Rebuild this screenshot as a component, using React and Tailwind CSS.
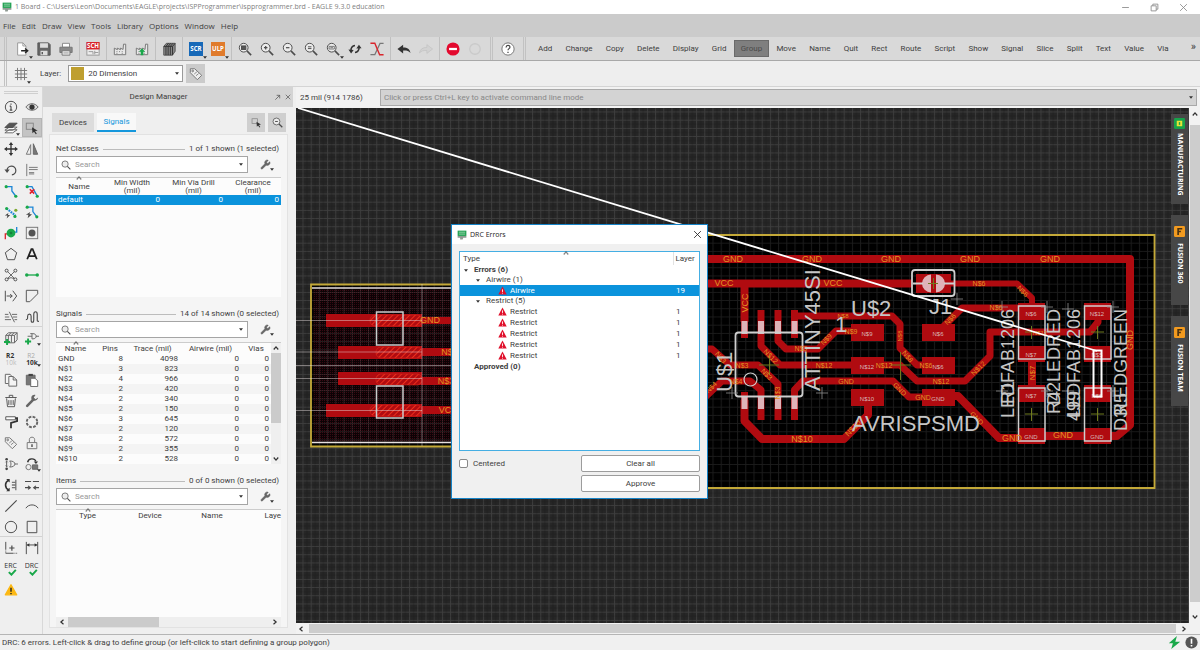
import { Wrench } from "lucide-react"
import clsx from "clsx"

const DARK = "#4c4c4c"
const GREEN = "#19a84a"
const BLUE = "#1c86d6"

const MENUS = ["File", "Edit", "Draw", "View", "Tools", "Library", "Options", "Window", "Help"]

const COMMANDS = [
    "Add", "Change", "Copy", "Delete", "Display", "Grid", "Group", "Move", "Name", "Quit", "Rect",
    "Route", "Script", "Show", "Signal", "Slice", "Split", "Text", "Value", "Via",
]

const SIGNALS = [
    ["GND", 8, 4098, 0, 0],
    ["N$1", 3, 823, 0, 0],
    ["N$2", 4, 966, 0, 0],
    ["N$3", 2, 420, 0, 0],
    ["N$4", 2, 340, 0, 0],
    ["N$5", 2, 150, 0, 0],
    ["N$6", 3, 645, 0, 0],
    ["N$7", 2, 120, 0, 0],
    ["N$8", 2, 572, 0, 0],
    ["N$9", 2, 355, 0, 0],
    ["N$10", 2, 528, 0, 0],
]

function Svg({ children, className = "size-[14px]" }) {
    return (
        <svg viewBox="0 0 16 16" className={className} fill="none" stroke={DARK} strokeWidth="1.1" aria-hidden="true">
            {children}
        </svg>
    )
}

/* ---------- top toolbar icons ---------- */

function Lens({ children }) {
    return (
        <>
            <circle cx="6.5" cy="6.5" r="5" fill="#ececec" />
            <path d="M10.2 10.2L15 15" strokeWidth="1.8" />
            {children}
        </>
    )
}

const Factory = (
    <path d="M1.5 14.5V7l3.5 1.8V7l3.5 1.8V7l3 1.5L12 2.5h2.5v12zM4 11h1M7 11h1M10 11h1M4 13h1M10 13h1" fill="#e8e8e8" stroke="#777" />
)

const TOP_ICONS = {
    new: (
        <>
            <path d="M3 1h6l3.5 3.5V15H3z" fill="#fff" stroke="#999" />
            <path d="M9 1v3.5h3.5" stroke="#999" />
            <path d="M7 10h7M11.5 7.5L14.5 10l-3 2.5" stroke="#222" strokeWidth="1.6" />
        </>
    ),
    save: (
        <>
            <path d="M1 1h12l2 2v12H1z" fill="#666" stroke="#555" />
            <path d="M3.5 1.5h9v5h-9zM4 10h8v5H4z" fill="#ddd" stroke="none" />
            <path d="M6 11.5v2.5" strokeWidth="1.5" />
        </>
    ),
    print: (
        <>
            <path d="M4 1.5h8V6H4z" fill="#fff" stroke="#888" />
            <path d="M1 6h14v6H1z" fill="#8a8a8a" stroke="#777" />
            <path d="M3.5 10h9v5h-9z" fill="#eee" stroke="#777" />
            <path d="M5 12.5h6" stroke="#999" />
        </>
    ),
    sch: (
        <>
            <rect x="1" y="1" width="14" height="14" fill="#eee" stroke="#999" />
            <rect x="0.5" y="0" width="15" height="8.5" fill="#d9252c" stroke="none" />
            <path d="M3 11h5v3M10 10v4M10 12h4" stroke="#999" />
            <text x="8" y="7" fontSize="7" fontWeight="700" fontFamily="Open Sans" textAnchor="middle" fill="#fff" stroke="none">SCH</text>
        </>
    ),
    cam: Factory,
    camUp: (
        <>
            {Factory}
            <path d="M8 7l3.5 4h-2v4h-3v-4h-2z" fill={GREEN} stroke="none" />
        </>
    ),
    library: (
        <>
            <path d="M2 5l3-3.5h10v9L12 15H2z" fill="#888" stroke="#555" />
            <path d="M2 5h10v10M12 5l3-3.5M4.5 5v10M7 5v10M9.5 5v10M4.5 5l3-3.5M7 5l3-3.5M9.5 5l3-3.5" stroke="#333" />
        </>
    ),
    scr: (
        <>
            <rect width="16" height="16" fill="#1769b8" stroke="none" />
            <text x="8" y="10.5" fontSize="7" fontWeight="700" fontFamily="Open Sans" textAnchor="middle" fill="#fff" stroke="none">SCR</text>
        </>
    ),
    ulp: (
        <>
            <rect width="16" height="16" fill="#e07b2c" stroke="none" />
            <text x="8" y="10.5" fontSize="7" fontWeight="700" fontFamily="Open Sans" textAnchor="middle" fill="#fff" stroke="none">ULP</text>
        </>
    ),
    zoomFit: <Lens><rect x="4" y="4.5" width="5" height="4" fill="#555" /></Lens>,
    zoomIn: <Lens><path d="M4.5 6.5h4M6.5 4.5v4" strokeWidth="1.4" /></Lens>,
    zoomOut: <Lens><path d="M4.5 6.5h4" strokeWidth="1.4" /></Lens>,
    zoomRedraw: <Lens><path d="M4.5 5.5h4M4.5 7.5h4" /></Lens>,
    zoomSelect: <Lens><path d="M3.5 5h6v3h-6zM5 6.5h3" stroke="#777" /></Lens>,
    refresh: (
        <>
            <path d="M3.5 10a5 5 0 0 1 4.5-6M12.5 6a5 5 0 0 1-4.5 6" strokeWidth="1.8" stroke="#333" />
            <path d="M0.5 8.5l3 4.5 3-4zM9.5 7.5l3-4.5 3 4z" fill="#333" stroke="none" />
        </>
    ),
    cut: (
        <>
            <path d="M15.5 1.5h-4L5.5 14.5H0.5" stroke="#777" strokeWidth="1.5" />
            <path d="M0.5 1.5h5L11 14.5h4.5" stroke="#d9252c" strokeWidth="1.6" />
        </>
    ),
    undo: <path d="M0.5 8L7 3v3.2c5 0 7.5 2 8.5 6.3C13 10 11 9.5 7 9.7V13z" fill="#333" stroke="none" />,
    redo: <path d="M15.5 8L9 3v3.2c-5 0-7.5 2-8.5 6.3C3 10 5 9.5 9 9.7V13z" fill="#d2d2d2" stroke="#c2c2c2" strokeWidth="0.8" />,
    stop: (
        <>
            <circle cx="8" cy="8" r="7.5" fill="#e3092e" stroke="none" />
            <path d="M3.5 8h9" stroke="#fff" strokeWidth="2.6" />
        </>
    ),
    go: <circle cx="8" cy="8" r="6" stroke="#cacaca" strokeWidth="1.5" />,
    help: (
        <>
            <circle cx="8" cy="8" r="7" fill="#fff" stroke="#777" />
            <path d="M5.8 6.2c0-3 4.4-3 4.4-.3 0 1.7-2.2 1.7-2.2 3.6M8 11v1.5" stroke="#444" strokeWidth="1.4" />
        </>
    ),
}

const TOP_GROUPS = [
    ["new", "save", "print"],
    ["sch"],
    ["cam", "camUp"],
    ["library"],
    ["scr", "ulp"],
    ["zoomFit", "zoomIn", "zoomOut", "zoomRedraw", "zoomSelect", "refresh", "cut"],
    ["undo", "redo"],
    ["stop", "go"],
]

const WITH_ARROW = ["new", "scr", "ulp", "zoomSelect", "layers", "addPart", "value", "replace"]

/* ---------- left toolbar icons ---------- */

const dot = (x, y, fill = GREEN, r = 1.8) => <circle cx={x} cy={y} r={r} fill={fill} stroke="none" />

const Tag = (
    <>
        <path d="M1.5 6.5V2h5l8 7.5-5 5z" fill="#eee" stroke="#777" />
        <circle cx="4.2" cy="4.5" r="1" stroke="#777" />
        <path d="M6 8l3-2.5M8 10l3-2.5" stroke="#888" />
    </>
)

const SIDE_ICONS = {
    info: (
        <>
            <circle cx="8" cy="8" r="6.5" />
            <path d="M8 7v4.5M6.5 7H8M6.5 11.5h3M8 4v1.3" strokeWidth="1.3" />
        </>
    ),
    show: (
        <>
            <path d="M1 8c3.5-5 10.5-5 14 0-3.5 5-10.5 5-14 0z" fill="#ddd" stroke="#666" />
            <circle cx="8" cy="8" r="3" fill="#333" stroke="none" />
        </>
    ),
    layers: (
        <>
            <path d="M1 13.5h9L15 10H6zM1 10.5h9L15 7H6z" fill="#fff" stroke="#666" />
            <path d="M1 7.5h9L15 2.5H6z" fill="#555" />
        </>
    ),
    group: (
        <>
            <rect x="1.5" y="2.5" width="8" height="7" stroke="#888" />
            <path d="M8 7l6.5 4-3 .5 2 3-1.2.7-2-3L8.5 14z" fill="#333" stroke="none" />
        </>
    ),
    move: (
        <>
            <path d="M8 3v10M3 8h10" stroke="#333" strokeWidth="1.5" />
            <path d="M8 0l2.5 3.5h-5zM8 16l2.5-3.5h-5zM0 8l3.5-2.5v5zM16 8l-3.5-2.5v5z" fill="#333" stroke="none" />
        </>
    ),
    mirror: (
        <>
            <path d="M6.5 3v11H1.5z" stroke="#777" />
            <path d="M9.5 2v12h5z" fill="#777" stroke="#666" />
        </>
    ),
    rotate: (
        <>
            <path d="M3.5 8.5a5 5 0 1 1 5.5 5" strokeWidth="1.4" />
            <path d="M0.5 7.5h6l-3 4z" fill={DARK} stroke="none" />
        </>
    ),
    align: <path d="M2 1v14M4.5 5h10M4.5 7.5h10M4.5 11h6M4.5 12.5h6" stroke="#777" />,
    route: <><path d="M2.5 3H9v5l4.5 6" stroke={BLUE} strokeWidth="1.5" />{dot(2.5, 3)}{dot(13.5, 14)}</>,
    ripup: (
        <>
            <path d="M2.5 3H8l5.5 10" stroke={BLUE} strokeWidth="1.5" />
            {dot(2.5, 3)}{dot(14, 14)}
            <path d="M5.5 6l5 5M10.5 6l-5 5" stroke="#e01f2d" strokeWidth="1.8" />
        </>
    ),
    fanout: (
        <>
            <path d="M3 4l10 8" stroke={BLUE} strokeWidth="2.5" strokeDasharray="2 1" />
            {dot(3, 4)}{dot(13.5, 6, "#7da82e")}{dot(12.5, 13)}
            <path d="M5 9l-4 3h3l-1 3.5 4-4H4.5z" fill="#444" stroke="none" />
        </>
    ),
    autoroute: (
        <>
            <path d="M2.5 2.5H9v5l4.5 6" stroke={BLUE} strokeWidth="1.5" />
            {dot(2.5, 2.5)}{dot(13.5, 13.5)}
            <path d="M6 8l-5 3h3l-1 4 5-4.5H5z" fill="#444" stroke="none" />
        </>
    ),
    via: (
        <>
            <path d="M1.5 15V9H6" stroke="#d9252c" strokeWidth="1.5" />
            <path d="M10 7h4.5V1" stroke={BLUE} strokeWidth="1.5" />
            {dot(8, 8, GREEN, 5)}{dot(8, 8, "#15803d", 1.5)}
        </>
    ),
    hole: (
        <>
            <rect x="1.5" y="1.5" width="13" height="13" stroke="#777" />
            {dot(8, 8, "#555", 4)}
        </>
    ),
    polygon: <path d="M8 1.5l6.5 5-2.5 8H4l-2.5-8z" />,
    text: <path d="M2.5 14L7.3 2.5h1.4L13.5 14M4.5 10.5h7" stroke="#222" strokeWidth="2" />,
    ratsnest: (
        <>
            <path d="M3.5 3.5l9 9M12.5 3.5l-9 9M3.5 12.5L8 11l4.5 1.5" stroke="#666" />
            <circle cx="3" cy="3" r="1.7" fill="#eee" /><circle cx="13" cy="3" r="1.7" fill="#eee" />
            <circle cx="3" cy="13" r="1.7" fill="#eee" /><circle cx="13" cy="13" r="1.7" fill="#eee" />
        </>
    ),
    airwire: <><path d="M2 8h12" stroke={GREEN} strokeWidth="1.5" />{dot(2, 8, GREEN, 2)}{dot(14, 8, GREEN, 2)}</>,
    split: <path d="M1.5 2v12M3 8h6M7 6l2.5 2L7 10M10 2l4.5 6L10 14" />,
    miter: <path d="M14.5 5.5v-4h-13v13h4M5.5 14.5l9-9" stroke="#555" />,
    slice: <path d="M1 5h4M1 8h5M1 11h7M6 2l6 12M9 5h6M10 8h5M12 11h3" stroke="#666" />,
    meander: <path d="M1 11c2 0 2-1 2-4s4-3 4 0v4c0 4 3 4 3 0V5c0-4 4-4 4 0v6c0 2 0 2 2 2" strokeWidth="1.3" />,
    addBoard: (
        <>
            <path d="M2 5l3-3h10v8l-3 3.5H2z" fill="#eee" stroke="#666" />
            <path d="M2 5h10v8.5M12 5l3-3M5 5v8M8.5 5v8M5 5l3-3M8.5 5l3-3" stroke="#666" />
            <path d="M3.5 9v7M0 12.5h7" stroke={GREEN} strokeWidth="2.2" />
        </>
    ),
    addPart: (
        <>
            <path d="M6 3h3c5 0 5 6 0 6H8V3M3 6h5M12.5 6H16" stroke="#666" />
            <path d="M3.5 8.5v7M0 12h7" stroke={GREEN} strokeWidth="2.2" />
        </>
    ),
    name: (
        <>
            <text x="7" y="7" fontSize="7.5" fontWeight="700" fontFamily="Open Sans" textAnchor="middle" fill="#333" stroke="none">R2</text>
            <text x="8" y="15" fontSize="7.5" fontFamily="Open Sans" textAnchor="middle" fill="#bbb" stroke="none">10k</text>
        </>
    ),
    value: (
        <>
            <text x="7" y="7" fontSize="7.5" fontFamily="Open Sans" textAnchor="middle" fill="#aaa" stroke="none">R2</text>
            <text x="8" y="15" fontSize="7.5" fontWeight="700" fontFamily="Open Sans" textAnchor="middle" fill="#333" stroke="none">10k</text>
        </>
    ),
    copy: <path d="M5 12H1.5V1.5H7L9 4M5.5 4h5l4 4v7h-9zM10.5 4v4h4" fill="#f4f4f4" stroke="#666" />,
    paste: (
        <>
            <path d="M1.5 2.5h10v11h-10z" fill="#777" stroke="#666" />
            <path d="M4 1h5v2.5H4z" fill="#444" stroke="none" />
            <path d="M6.5 6h5l3 3v6.5h-8z" fill="#fff" stroke="#666" />
        </>
    ),
    trash: <path d="M3 5l1 9.5h8L13 5M1.5 4h13M6 3.5V1.5h4v2M5.5 7v5.5M8 7v5.5M10.5 7v5.5" stroke="#555" />,
    change: (
        <>
            <path d="M2.5 13.5l7-7" stroke="#666" strokeWidth="3" strokeLinecap="round" />
            <path d="M15 4l-3 2-2-2 2-3c-4-1-6 3-4 6 3 2 7 0 7-3z" fill="#666" stroke="none" />
        </>
    ),
    paint: (
        <>
            <path d="M2 2h11v3.5H2z" fill="#fff" stroke="#555" />
            <path d="M13 3.5h2V7L8 9v6" stroke="#333" strokeWidth="2" />
        </>
    ),
    optimize: <circle cx="8" cy="8" r="6" stroke="#666" strokeWidth="2.2" strokeDasharray="3.2 1.51" />,
    tag: Tag,
    lock: (
        <>
            <path d="M2.5 7.5h11v7h-11zM5 7V4c0-3.5 6-3.5 6 0v3" stroke="#777" />
            <path d="M8 9.5v3" strokeWidth="1.6" />
        </>
    ),
    pinswap: (
        <>
            {dot(3, 2.5, "#444", 1.5)}{dot(3, 13.5, "#444", 1.5)}
            <path d="M3 5v6M1.8 6L3 4.8 4.2 6M1.8 10L3 11.2 4.2 10" stroke="#555" />
            <path d="M6.5 4.5c8 0 8 7 0 7 2-2 2-5 0-7zM12.5 8H16" stroke="#666" />
        </>
    ),
    replace: (
        <>
            <path d="M3 6c1-5 8-5 9.5-1" stroke="#333" strokeWidth="1.6" />
            <path d="M10 5h5l-2.5 3z" fill="#333" stroke="none" />
            <circle cx="4" cy="11.5" r="3" stroke="#777" />
            <path d="M8.5 9h6v5h-6z" fill="#777" stroke="#666" />
        </>
    ),
    gateswap: (
        <>
            <path d="M5.5 2.5c-5 2-5 9 0 11" stroke="#333" strokeWidth="1.8" />
            <path d="M2.5 1h4v4zM2.5 15h4v-4z" fill="#333" stroke="none" />
            <path d="M9 5h4M9 8h4M9 11h4M13.5 2v12" stroke="#777" strokeWidth="1.5" />
        </>
    ),
    join: <path d="M0 4h7M9 4h7M0 11h5M3.5 9L6 11l-2.500 2M16 11h-5M12.5 9L10 11l2.5 2" strokeWidth="1.4" />,
    line: <path d="M1.5 14.5l13-13" strokeWidth="1.3" />,
    arc: <path d="M1 10.5c3-5 11-5 14 0" />,
    circle: <circle cx="8" cy="8" r="6.5" />,
    rect: <path d="M2.5 1.5h11v13h-11z" />,
    mark: (
        <>
            <path d="M2 1v13M2 14h13" strokeDasharray="9 1 1 1" />
            <path d="M9 5v6M6 8h6" strokeWidth="1.4" />
        </>
    ),
    dimension: (
        <>
            <path d="M1.5 1v14M14.5 1v14M2 4.5h12" />
            <path d="M2 4.5l3-2v4zM14 4.5l-3-2v4z" fill="#333" stroke="none" />
        </>
    ),
    erc: (
        <>
            <text x="7.5" y="7" fontSize="8" fontFamily="Open Sans" textAnchor="middle" fill="#333" stroke="none">ERC</text>
            <path d="M5.5 11.5l3 3 5-5.5" stroke={GREEN} strokeWidth="2.2" />
        </>
    ),
    drc: (
        <>
            <text x="7.5" y="7" fontSize="8" fontFamily="Open Sans" textAnchor="middle" fill="#333" stroke="none">DRC</text>
            <path d="M5.5 11.5l3 3 5-5.5" stroke={GREEN} strokeWidth="2.2" />
        </>
    ),
    errors: (
        <>
            <path d="M8 2l6.5 11.5h-13z" fill="#fcb813" stroke="#fcb813" strokeWidth="1.5" strokeLinejoin="round" />
            <path d="M8 5.5v4.5M8 11.3v1.5" stroke="#222" strokeWidth="1.6" />
        </>
    ),
}

const SIDE_GROUPS = [
    ["info", "show", "layers", "group"],
    ["move", "mirror", "rotate", "align"],
    ["route", "ripup", "fanout", "autoroute", "via", "hole", "polygon", "text", "ratsnest", "airwire", "split", "miter", "slice", "meander"],
    ["addBoard", "addPart", "name", "value", "copy", "paste", "trash", "change", "paint", "optimize", "tag", "lock", "pinswap", "replace", "gateswap", "join"],
    ["line", "arc", "circle", "rect"],
    ["mark", "dimension", "erc", "drc", "errors"],
]

function Caret({ className }) {
    return (
        <svg viewBox="0 0 6 4" className={clsx("h-[3px] w-[4px] shrink-0", className)} aria-hidden="true">
            <path d="M0 0h6L3 4z" fill="#333" />
        </svg>
    )
}

function Chevron({ className }) {
    return (
        <svg viewBox="0 0 8 8" className={clsx("size-[6px] shrink-0", className)} fill="none" stroke="#333" strokeWidth="1.6" aria-hidden="true">
            <path d="M1 6l3-3.5L7 6" />
        </svg>
    )
}

function BoardLogo() {
    return (
        <Svg className="size-[10px] shrink-0">
            <path d="M1 1h14v8.5H1z" fill="#21a052" stroke="none" />
            <path d="M3 3.5h10M3 6.5h10" stroke="#bfe8cc" />
            <path d="M1 9.5h14v3h-5L9 15H5v-2.5H1z" fill="#8f9a93" stroke="none" />
        </Svg>
    )
}

function IconButton({ name, icons, className }) {
    return (
        <button aria-label={name} className={clsx("relative flex items-center justify-center", className)}>
            <Svg>{icons[name]}</Svg>
            {WITH_ARROW.includes(name) && <Caret className="absolute right-0 bottom-0" />}
        </button>
    )
}

function TitleBar() {
    return (
        <header className="flex h-[14px] items-center bg-white pr-3 pl-0.5 font-['Open_Sans',sans-serif] text-[7px] text-[#808080]">
            <BoardLogo />
            <h1 className="ml-[3px] flex-1 whitespace-nowrap">
                1 Board - C:\Users\Leon\Documents\EAGLE\projects\ISPProgrammer\ispprogrammer.brd - EAGLE 9.3.0 education
            </h1>
            <div className="flex gap-5">
                <button aria-label="Minimize"><Svg className="size-[9px]"><path d="M2 8h12" stroke="#888" strokeWidth="1.5" /></Svg></button>
                <button aria-label="Restore"><Svg className="size-[9px]"><path d="M2 5h9v9H2zM5 5V2h9v9h-3" stroke="#888" strokeWidth="1.5" /></Svg></button>
                <button aria-label="Close"><Svg className="size-[9px]"><path d="M2 2l12 12M14 2L2 14" stroke="#888" strokeWidth="1.5" /></Svg></button>
            </div>
        </header>
    )
}

function Grip() {
    return <span className="mx-1 w-[3px] self-stretch border-x border-[#c2c2c2]" />
}

function TopToolbar() {
    return (
        <div className="flex h-6 items-center border-b border-[#a8a8a8] bg-[#d9d9d9]">
            <Grip />
            {TOP_GROUPS.map((group, i) => (
                <div key={i} className="flex h-full items-center">
                    {i > 0 && <span className="mx-0.5 w-px self-stretch bg-[#c0c0c0]" />}
                    {group.map(name => (
                        <IconButton key={name} name={name} icons={TOP_ICONS} className="h-[20px] w-[22px]" />
                    ))}
                </div>
            ))}
            <Grip />
            <IconButton name="help" icons={TOP_ICONS} className="h-[20px] w-[22px]" />
            <Grip />
            <div className="ml-0.5 flex flex-1 items-center justify-between">
                {COMMANDS.map(command => (
                    <button
                        key={command}
                        className={clsx("h-[17px] px-1.5", command === "Group" && "border border-[#6a6a6a] bg-[#7f7f7f] text-[#4a4a4a]")}
                    >
                        {command}
                    </button>
                ))}
            </div>
            <button aria-label="More commands" className="mb-1 ml-4 pr-1 text-[11px] leading-3">»</button>
        </div>
    )
}

function LayerBar() {
    return (
        <div className="flex h-[26px] items-center border-b border-[#d4d4d4] bg-[#eee]">
            <Grip />
            <button aria-label="Grid" className="relative flex h-[20px] w-[20px] items-center justify-center">
                <Svg><path d="M1 4h14M1 8h14M1 12h14M4 1v14M8 1v14M12 1v14" stroke="#777" /></Svg>
                <Caret className="absolute right-0 bottom-0" />
            </button>
            <label htmlFor="layer" className="ml-[9px]">Layer:</label>
            <div className="relative ml-[7px]">
                <select id="layer" className="h-[17px] w-[115px] appearance-none border border-[#9a9a9a] bg-white pl-[19px] outline-none">
                    <option>20 Dimension</option>
                </select>
                <span className="pointer-events-none absolute top-0.5 left-[3px] size-[13px] bg-[#bf9f2f]" />
                <Caret className="pointer-events-none absolute top-[7px] right-1" />
            </div>
            <button aria-label="Tags" className="ml-[3px] flex size-[19px] items-center justify-center bg-[#cbcbcb]">
                <Svg>{Tag}</Svg>
            </button>
        </div>
    )
}

function SideToolbar() {
    return (
        <nav className="flex w-[43px] shrink-0 flex-col border-r border-[#d8d8d8] bg-[#efefef]">
            <span className="mx-1 mt-1 h-[3px] border-y border-[#cfcfcf]" />
            <div className="pt-0.5">
                {SIDE_GROUPS.map((group, i) => (
                    <div key={i} className={clsx("grid auto-rows-[21px] grid-cols-2 justify-items-center", i > 0 && "shadow-[0_-1px_0_#d2d2d2]")}>
                        {group.map(name => (
                            <IconButton
                                key={name}
                                name={name}
                                icons={SIDE_ICONS}
                                className={clsx("my-0.5 w-[18px]", name === "group" && "bg-[#c4c4c4] outline outline-[#b5b5b5]")}
                            />
                        ))}
                    </div>
                ))}
            </div>
        </nav>
    )
}

function SectionHeader({ title, summary }) {
    return (
        <div className="flex h-3.5 items-center gap-1 pr-0.5">
            <h2>{title}</h2>
            <span className="flex-1 border-t border-[#bcbcbc]" />
            <span>{summary}</span>
        </div>
    )
}

function SearchRow({ label }) {
    return (
        <div className="mb-1 flex h-[17px] items-center">
            <div className="flex h-full w-[192px] items-center border border-[#a5a5a5] bg-white px-1">
                <Svg className="size-[10px] shrink-0"><Lens /></Svg>
                <input type="text" aria-label={label} placeholder="Search" className="ml-1 min-w-0 flex-1 bg-transparent outline-none placeholder:text-[#999]" />
                <button aria-label={`${label} history`}><Caret /></button>
            </div>
            <button aria-label={`${label} settings`} className="relative ml-3 flex h-full w-[14px] items-center">
                <Wrench size={11} fill="#666" stroke="#666" strokeWidth={1} />
                <Caret className="absolute right-0 bottom-0.5" />
            </button>
        </div>
    )
}

function SortMark() {
    return <Chevron className="absolute -top-[3px] left-1/2 -translate-x-1/2 opacity-60" />
}

function DesignManager() {
    return (
        <aside className="flex w-[253px] shrink-0 flex-col bg-[#efefef]">
            <div className="mr-[3px] flex h-5 items-center bg-[#d4d4d4] pr-0.5">
                <h2 className="flex-1 text-center">Design Manager</h2>
                <button aria-label="Undock"><Svg className="mr-1 size-[7px]"><path d="M3 13L13 3M6 3h7v7" strokeWidth="1.6" /></Svg></button>
                <button aria-label="Close panel"><Svg className="size-[6px]"><path d="M2 2l12 12M14 2L2 14" strokeWidth="1.8" /></Svg></button>
            </div>

            <div className="mt-[6px] mr-2.5 mb-0.5 ml-[9px] flex h-[19px] items-stretch gap-[3px]">
                <button className="w-[42px] bg-[#dcdcdc]">Devices</button>
                <button className="w-[39px] border-b-2 border-[#1597dc] bg-[#f8f8f8] text-[#1597dc]">Signals</button>
                <button aria-label="Select in board" className="ml-auto flex w-[18px] items-center justify-center bg-[#cfcfcf]">
                    <Svg className="size-[11px]">{SIDE_ICONS.group}</Svg>
                </button>
                <button aria-label="Zoom to selection" className="flex w-[18px] items-center justify-center bg-[#cfcfcf]">
                    <Svg className="size-[11px]">{TOP_ICONS.zoomOut}</Svg>
                </button>
            </div>

            <div className="mr-2 mb-1.5 ml-[6px] flex flex-1 flex-col border border-[#e2e2e2] bg-[#f5f5f5] px-1.5 pt-[7px]">
                <section className="flex h-[155px] flex-col">
                    <SectionHeader title="Net Classes" summary="1 of 1 shown (1 selected)" />
                    <SearchRow label="Net classes" />
                    <div className="flex-1 border-t border-[#ccc] bg-[#fcfcfc]">
                        <table className="w-full table-fixed leading-[8px]">
                            <thead>
                                <tr className="h-[17px]">
                                    <th className="relative w-[46px] font-normal"><SortMark />Name</th>
                                    <th className="w-[60px] font-normal">Min Width<br />(mil)</th>
                                    <th className="w-[63px] font-normal">Min Via Drill<br />(mil)</th>
                                    <th className="font-normal">Clearance<br />(mil)</th>
                                </tr>
                            </thead>
                            <tbody>
                                <tr className="h-2.5 bg-[#0b93dc] text-right text-white">
                                    <td className="pl-0.5 text-left">default</td>
                                    <td className="pr-0.5">0</td>
                                    <td className="pr-0.5">0</td>
                                    <td className="pr-0.5">0</td>
                                </tr>
                            </tbody>
                        </table>
                    </div>
                </section>

                <section className="mt-2.5">
                    <SectionHeader title="Signals" summary="14 of 14 shown (0 selected)" />
                    <SearchRow label="Signals" />
                    <div className="flex border-t border-[#ccc] bg-[#fcfcfc]">
                        <table className="flex-1 table-fixed leading-[10px]">
                            <thead>
                                <tr className="h-[11px]">
                                    <th className="relative w-[39px] font-normal"><SortMark />Name</th>
                                    <th className="w-[30px] font-normal">Pins</th>
                                    <th className="w-[55px] font-normal">Trace (mil)</th>
                                    <th className="w-[61px] font-normal">Airwire (mil)</th>
                                    <th className="font-normal">Vias</th>
                                </tr>
                            </thead>
                            <tbody>
                                {SIGNALS.map(([name, ...values]) => (
                                    <tr key={name} className="h-2.5 text-right even:bg-[#f4f4f4]">
                                        <td className="pl-0.5 text-left">{name}</td>
                                        {values.map((value, i) => <td key={i} className="pr-0.5">{value}</td>)}
                                    </tr>
                                ))}
                            </tbody>
                        </table>
                        <div className="flex w-[10px] flex-col items-center bg-[#efefef] py-0.5">
                            <Chevron />
                            <span className="mt-0.5 h-[70px] w-full bg-[#cbcbcb]" />
                            <Chevron className="mt-auto rotate-180" />
                        </div>
                    </div>
                </section>

                <section className="mt-2.5 flex flex-1 flex-col">
                    <SectionHeader title="Items" summary="0 of 0 shown (0 selected)" />
                    <SearchRow label="Items" />
                    <div className="flex-1 border-t border-[#ccc] bg-[#fcfcfc]">
                        <table className="w-full table-fixed leading-[12px]">
                            <thead>
                                <tr>
                                    <th className="relative w-[63px] font-normal"><SortMark />Type</th>
                                    <th className="w-[62px] font-normal">Device</th>
                                    <th className="w-[62px] font-normal">Name</th>
                                    <th className="text-right font-normal">Laye</th>
                                </tr>
                            </thead>
                        </table>
                    </div>
                    <div className="flex h-2.5 items-center bg-[#efefef] px-[3px]">
                        <Chevron className="-rotate-90" />
                        <span className="ml-[3px] h-full w-[91px] bg-[#cbcbcb]" />
                        <Chevron className="ml-auto rotate-90" />
                    </div>
                </section>
            </div>
        </aside>
    )
}

/* ---------- board drawing ---------- */

const TRACES = [
    { w: 8, d: "M700 259H1130V425L1117 436H1045" },
    { w: 8, d: "M700 283.5H912M744.5 283V322" },
    { w: 8, d: "M744.5 400V421L762 439H844L868 415V400" },
    { w: 7, d: "M761 310V346L780 365H852" },
    { w: 7, d: "M778 310V341L786 349H818L836 331H852" },
    { w: 7, d: "M794 316H892L900 324V348L917 365H930M794.5 310V338" },
    { w: 7, d: "M700 349H712L730 365H758L778 384V420" },
    { w: 7, d: "M700 402L722 381H750L761 390V420" },
    { w: 7, d: "M794.5 420V390L803 381H893L909 397H925" },
    { w: 7, d: "M880 365H900L917 381H965L990 356V332H1090L1098 322V312" },
    { w: 7, d: "M938 332L962 308H1030" },
    { w: 6, d: "M950 283.5H1017L1032 298V308" },
    { w: 8, d: "M950 396H958L999 438H1025" },
    { w: 8, d: "M1032 355V392" },
    { w: 7, d: "M744.5 316V338M744.5 392V420" },
]

// text, x, y, angle, size
const NET_LABELS = [
    ["GND", 733, 262, 0, 9], ["GND", 812, 262, 0, 9], ["GND", 891, 262, 0, 9], ["GND", 970, 262, 0, 9], ["GND", 1050, 262, 0, 9],
    ["VCC", 724, 286, 0, 9], ["VCC", 833, 286, 0, 9], ["VCC", 748, 303, -90, 9], ["N$10", 802, 442, 0, 9],
    ["GND", 1012, 441, 0, 9], ["GND", 1063, 438, 0, 9], ["GND", 1133, 340, -90, 9], ["N$7", 1035, 373, -90, 8],
    ["N$8", 843, 318, 0, 6], ["N$8", 902, 336, -90, 6], ["N$8", 906, 358, 50, 7], ["N$9", 828, 341, -45, 7],
    ["N$9", 851, 334, 0, 7], ["N$9", 801, 351, 0, 7], ["N$12", 769, 358, 45, 7], ["N$12", 824, 368, 0, 7],
    ["N$12", 884, 368, 0, 7], ["N$3", 742, 368, 0, 7], ["N$3", 765, 376, 45, 7], ["N$3", 780, 393, -90, 7],
    ["N$3", 719, 359, 50, 7], ["N$4", 736, 384, 0, 7], ["N$4", 713, 389, -45, 7], ["GND", 846, 384, 0, 7],
    ["GND", 898, 391, 45, 7], ["GND", 923, 400, 0, 7], ["N$6", 979, 286, 0, 7], ["N$6", 1021, 293, 45, 7],
    ["N$6", 996, 310, 0, 7], ["N$6", 952, 321, -45, 7], ["N$12", 980, 370, -45, 7], ["N$12", 941, 384, 0, 7],
    ["GND", 975, 420, 45, 7], ["N$6", 926, 368, 0, 7], ["N$10", 855, 430, -48, 8], ["N$12", 1040, 335, 0, 6],
    ["GND", 430, 323, 0, 9], ["N$", 447, 355, 0, 9], ["N$3", 446, 384, 0, 9], ["VC", 445, 413, 0, 9],
]

const HEADER_PADS = [
    [851, 324, "N$9"], [851, 357, "N$12"], [851, 389, "N$10"],
    [922, 324, "N$6"], [922, 357, "N$6"], [922, 389, "GND"],
]

// chip parts: x, y, top net, bottom net
const CHIPS = [
    [1018, 306, "N$6", "N$7"], [1018, 388, "N$7", "GND"],
    [1084, 306, "N$12", "N$5"], [1084, 388, "N$5", "GND"],
]

const SILK = [
    ["U$2", 851, 316, 0, 22], ["J1", 929, 314, 0, 22], ["1", 835, 332, 0, 22], ["AVRISPSMD", 852, 431, 0, 22],
    ["ATTINY45SI", 820, 391, -90, 22], ["U$1", 732, 392, -90, 22],
    ["LEDFAB1206", 1014, 418, -90, 18], ["R1", 1014, 404, -90, 18],
    ["LEDRED", 1060, 382, -90, 18], ["R4", 1060, 414, -90, 18], ["D2", 1060, 405, -90, 18],
    ["LEDFAB1206", 1080, 418, -90, 18], ["499", 1080, 421, -90, 18],
    ["LEDGREEN", 1127, 408, -90, 18], ["D3", 1127, 431, -90, 18], ["R5", 1127, 416, -90, 18],
]

const CROSSES = [[732, 393], [822, 393], [957, 299], [1002, 307], [1047, 307], [1068, 309], [1113, 307], [1002, 391], [1047, 391], [1068, 391], [1113, 391]]

function BoardCanvas() {
    return (
        <svg viewBox="296 108 893 525" preserveAspectRatio="xMinYMin slice" className="absolute inset-0 h-full w-full" role="img" aria-label="Board layout">
            <defs>
                <pattern id="grid" x="302.5" y="111.5" width="8.2" height="8.2" patternUnits="userSpaceOnUse">
                    <path d="M0 0.5H8.2M0.5 0V8.2" stroke="#fff" strokeOpacity="0.11" />
                    <path d="M0 4.5H8.2M4.5 0V8.2" stroke="#000" strokeOpacity="0.15" />
                </pattern>
                <pattern id="dots" width="2" height="2" patternUnits="userSpaceOnUse">
                    <rect width="2" height="2" fill="#0c0204" />
                    <rect width="1" height="1" fill="#3a0a14" />
                </pattern>
                <pattern id="hatch" width="4" height="4" patternUnits="userSpaceOnUse" patternTransform="rotate(45)">
                    <path d="M0 0V4" stroke="#ff3a20" strokeWidth="1.5" />
                </pattern>
            </defs>
            <rect x="296" y="108" width="2000" height="1200" fill="#262626" />
            <rect x="311" y="284.5" width="160" height="162" fill="#000" />
            <rect x="313" y="289" width="150" height="153" fill="url(#dots)" />
            <rect x="690" y="235" width="465" height="253" fill="#000" />
            <rect x="296" y="108" width="2000" height="1200" fill="url(#grid)" />

            {/* copper */}
            <g fill="#b00b10">
                <path d="M326 314h96v3h40v7h-40v3h-96zM338 346h84v2h40v8h-40v3h-84zM338 372h84v5h40v8h-124zM326 404h96v2h40v8h-40v3h-96z" />
                {HEADER_PADS.map(([x, y]) => <rect key={`${x}-${y}`} x={x} y={y} width="33" height="17" />)}
                {CHIPS.map(([x, y]) => <path key={`${x}-${y}`} d={`M${x} ${y - 3}h27v17h-27zM${x} ${y + 40}h27v16h-27z`} />)}
                <rect x="916" y="274" width="35" height="19" />
            </g>
            <g fill="none" stroke="#b00b10" strokeLinejoin="round">
                {TRACES.map(t => <path key={t.d} d={t.d} strokeWidth={t.w} />)}
            </g>
            <g fill="url(#hatch)" stroke="#d8281c" strokeWidth="0.6">
                <rect x="370" y="315" width="52" height="11" rx="5" />
                <rect x="376" y="347" width="46" height="11" rx="5" />
                <rect x="376" y="374" width="46" height="11" rx="5" />
                <rect x="370" y="405" width="52" height="11" rx="5" />
            </g>

            {/* outlines */}
            <g fill="none" stroke="#c4a938" strokeWidth="1.8">
                <path d="M460 284.5H311V446.5H460" />
                <path d="M690 235H1154.5V488H690" />
            </g>
            <g stroke="#e8e0e0" fill="none">
                <path d="M312 288H460M312 442.5H460" strokeWidth="1.5" />
                <path d="M422 284V446M296 320.5H422M296 352H422M296 365.5H460M296 378.5H422M296 410.5H422" strokeOpacity="0.45" />
                <path d="M376.5 312h26.5v33h-26.5zM376.5 386h26.5v32h-26.5z" strokeWidth="1.5" stroke="#ccc" />
            </g>

            {/* IC package */}
            <g fill="#dfb3b8">
                {[744.5, 761, 778, 794.5].map(x => (
                    <path key={x} d={`M${x - 3} 321h6v13h-6zM${x - 3} 396h6v13h-6z`} />
                ))}
                <path d="M931 274.5a9 9 0 0 0 0 18zM936 274.5a9 9 0 0 1 0 18z" />
            </g>
            <g fill="none" stroke="#cfcfcf" strokeWidth="1.8">
                <rect x="735.5" y="332.5" width="67" height="64" rx="3" />
                <circle cx="750.5" cy="379.5" r="6.5" strokeWidth="1.2" />
                <rect x="912" y="270" width="42.5" height="26" rx="3" />
                {CHIPS.map(([x, y]) => <rect key={`${x}-${y}`} x={x + 0.5} y={y} width="26.5" height="53" strokeWidth="1.5" />)}
                <path d="M913 283.5h10M944 283.5h10" />
            </g>
            <g fill="none" stroke="#8f8f8f" strokeWidth="0.8">
                {CROSSES.map(([x, y]) => <path key={`${x}-${y}`} d={`M${x - 6} ${y}h12M${x} ${y - 6}v12`} />)}
            </g>
            <g stroke="#6f7a1e" fill="none">
                <path d="M759 365h20M769.5 355v20M891 365h20M900.5 352v28M928 283.5h10M933.5 278v11" />
                {CHIPS.map(([x, y]) => <path key={`${x}-${y}`} d={`M${x + 7} ${y + 26}h13M${x + 13.5} ${y + 20}v13`} />)}
            </g>

            <g fontFamily="Liberation Sans, Arial, sans-serif" textAnchor="middle" fill="#e39422">
                {NET_LABELS.map(([text, x, y, angle, size]) => (
                    <text key={`${x}-${y}`} transform={`translate(${x} ${y}) rotate(${angle})`} fontSize={size}>{text}</text>
                ))}
            </g>
            <g fontFamily="Liberation Sans, Arial, sans-serif" textAnchor="middle" fontSize="6" fill="#d8b8b8">
                {HEADER_PADS.map(([x, y, net]) => <text key={`${x}-${y}`} x={x + 16} y={y + 12}>{net}</text>)}
                {CHIPS.map(([x, y, top, bottom]) => (
                    <g key={`${x}-${y}`}>
                        <text x={x + 13} y={y + 10}>{top}</text>
                        <text x={x + 13} y={y + 51}>{bottom}</text>
                    </g>
                ))}
            </g>
            <g fontFamily="Liberation Sans, Arial, sans-serif" fill="#c6c6c6">
                {SILK.map(([text, x, y, angle, size]) => (
                    <text key={`${text}-${x}-${y}`} transform={`translate(${x} ${y}) rotate(${angle})`} fontSize={size}>{text}</text>
                ))}
            </g>

            <g fill="none" stroke="#fff" strokeWidth="2">
                <path d="M298 108L1097 351" strokeWidth="1.8" />
                <rect x="1093.5" y="350.5" width="8" height="46" />
            </g>
        </svg>
    )
}

function SideTab({ children, green }) {
    return (
        <button
            className={clsx(
                "flex h-[90px] w-[17px] flex-col items-center bg-[#474747] font-['Open_Sans',sans-serif] text-[7px] font-bold text-white",
                green ? "gap-1 pt-1" : "gap-1.5 pt-[11px]"
            )}
        >
            <Svg className="size-[11px] shrink-0">
                {green ? (
                    <>
                        <rect width="16" height="16" rx="2" fill="#17a34a" stroke="none" />
                        <rect x="4" y="4" width="8" height="8" fill="#e8e337" stroke="none" />
                        <path d="M8 6v4" stroke="#17a34a" strokeWidth="2" />
                    </>
                ) : (
                    <>
                        <rect width="16" height="16" rx="2" fill="#f29a1f" stroke="none" />
                        <path d="M6 13V4h6M6 8h4" stroke="#4a3210" strokeWidth="2.4" />
                    </>
                )}
            </Svg>
            <span className="whitespace-nowrap [writing-mode:vertical-rl]">{children}</span>
        </button>
    )
}

function BoardArea() {
    return (
        <main className="flex min-w-0 flex-1 flex-col bg-[#f2f2f2]">
            <div className="flex h-[21px] items-center pr-[3px] pl-1">
                <label htmlFor="command" className="w-[80px]">25 mil (914 1786)</label>
                <div className="flex h-[17px] flex-1 items-center border border-[#a9a9a9] bg-[#d3d3d3] px-[3px]">
                    <input
                        id="command"
                        type="text"
                        placeholder="Click or press Ctrl+L key to activate command line mode"
                        className="min-w-0 flex-1 bg-transparent outline-none placeholder:text-[#888]"
                    />
                    <button aria-label="Command history"><Caret /></button>
                </div>
            </div>
            <div className="flex flex-1">
                <div className="relative flex-1 overflow-hidden">
                    <BoardCanvas />
                    <div className="relative ml-auto flex w-[18px] flex-col gap-[11px] pt-1.5">
                        <SideTab green>MANUFACTURING</SideTab>
                        <SideTab>FUSION 360</SideTab>
                        <SideTab>FUSION TEAM</SideTab>
                    </div>
                </div>
                <div className="flex w-[11px] flex-col items-center bg-[#f2f2f2] py-[3px] pl-px">
                    <Chevron />
                    <span className="mt-2 mb-3 w-full flex-1 bg-[#cdcdcd]" />
                    <Chevron className="rotate-180" />
                </div>
            </div>
            <div className="flex h-[11px] items-center pr-[13px] pl-0.5">
                <Chevron className="-rotate-90" />
                <span className="mx-[5px] h-[9px] flex-1 bg-[#cdcdcd]" />
                <Chevron className="rotate-90" />
            </div>
        </main>
    )
}

/* ---------- DRC dialog ---------- */

function Warning() {
    return (
        <Svg className="mr-[3px] size-[9px] shrink-0">
            <path d="M8 1l7.5 14H0.5z" fill="#e0102c" stroke="none" />
            <path d="M8 6v4.5M8 12v1.5" stroke="#fff" strokeWidth="1.6" />
        </Svg>
    )
}

const TREE = [
    { text: "Errors (6)", open: true, bold: true, pad: "pl-1" },
    { text: "Airwire (1)", open: true, pad: "pl-4" },
    { text: "Airwire", layer: 19, warning: true, selected: true, pad: "pl-[38px]" },
    { text: "Restrict (5)", open: true, pad: "pl-4" },
    ...Array.from({ length: 5 }, () => ({ text: "Restrict", layer: 1, warning: true, pad: "pl-[38px]" })),
    { text: "Approved (0)", bold: true, pad: "pl-3.5" },
]

function DrcDialog() {
    return (
        <section role="dialog" aria-label="DRC Errors" className="absolute top-[224px] left-[451px] flex h-[275px] w-[257px] flex-col border border-[#1583c7] bg-[#f0f0f0]">
            <div className="flex h-[19px] items-center bg-white px-[5px]">
                <BoardLogo />
                <h2 className="ml-[3px] flex-1 font-['Open_Sans',sans-serif] text-[7px] text-[#222]">DRC Errors</h2>
                <button aria-label="Close dialog"><Svg className="size-[9px]"><path d="M2 2l12 12M14 2L2 14" stroke="#222" strokeWidth="1.5" /></Svg></button>
            </div>
            <div className="mx-[7px] mt-[7px] flex-1 border border-[#45aee3] bg-white">
                <table className="w-full table-fixed leading-[10px]">
                    <thead>
                        <tr className="h-[13px] text-left">
                            <th className="relative pl-[3px] font-normal">
                                Type
                                <Chevron className="absolute -top-0.5 left-1/2 -translate-x-1/2 opacity-60" />
                            </th>
                            <th className="w-[26px] border-l border-[#e2e2e2] pl-0.5 font-normal">Layer</th>
                        </tr>
                    </thead>
                    <tbody>
                        {TREE.map((row, i) => (
                            <tr
                                key={i}
                                className={clsx(row.open ? "h-2.5" : "h-[11px]", row.selected && "bg-[#0b93dc] text-white", row.bold && "font-bold")}
                            >
                                <td className={row.pad}>
                                    <span className="flex items-center">
                                        {row.open && <Caret className="mr-[6px]" />}
                                        {row.warning && <Warning />}
                                        {row.text}
                                    </span>
                                </td>
                                <td className="pl-[3px]">{row.layer}</td>
                            </tr>
                        ))}
                    </tbody>
                </table>
            </div>
            <div className="mx-[7px] mt-1 mb-[6px] flex items-start justify-between">
                <label className="flex h-[17px] items-center gap-[5px]">
                    <input type="checkbox" className="size-[9px] appearance-none rounded-xs border border-[#888] bg-white" />
                    Centered
                </label>
                <div className="flex w-[119px] flex-col gap-[3px]">
                    <button className="h-[17px] rounded-xs border border-[#9c9c9c] bg-white">Clear all</button>
                    <button className="h-[17px] rounded-xs border border-[#9c9c9c] bg-white">Approve</button>
                </div>
            </div>
        </section>
    )
}

export default function App() {
    return (
        <div className="relative flex min-h-screen flex-col bg-[#efefef] font-[Roboto,'Open_Sans',sans-serif] text-[8px] leading-[10px] text-[#404040]">
            <TitleBar />
            <nav className="flex h-[23px] items-center gap-[6px] bg-[#cbcbcb] px-[3px] font-['Open_Sans',sans-serif]">
                {MENUS.map(menu => <button key={menu}>{menu}</button>)}
            </nav>
            <TopToolbar />
            <LayerBar />
            <div className="flex flex-1">
                <SideToolbar />
                <DesignManager />
                <BoardArea />
            </div>
            <footer className="flex h-4 items-center border-t border-[#b5b5b5] bg-[#f0f0f0] px-0.5">
                <p className="flex-1">DRC: 6 errors. Left-click &amp; drag to define group (or left-click to start defining a group polygon)</p>
                <Svg className="mr-1 size-[13px]"><path d="M11 0L1 9h5l-2 7 11-9H9z" fill={GREEN} stroke="none" /></Svg>
                <Svg className="size-[13px]">
                    <circle cx="8" cy="8" r="7.5" fill="#555" stroke="none" />
                    <path d="M8 3.5v6M8 11v2" stroke="#fff" strokeWidth="2" />
                </Svg>
            </footer>
            <DrcDialog />
        </div>
    )
}
